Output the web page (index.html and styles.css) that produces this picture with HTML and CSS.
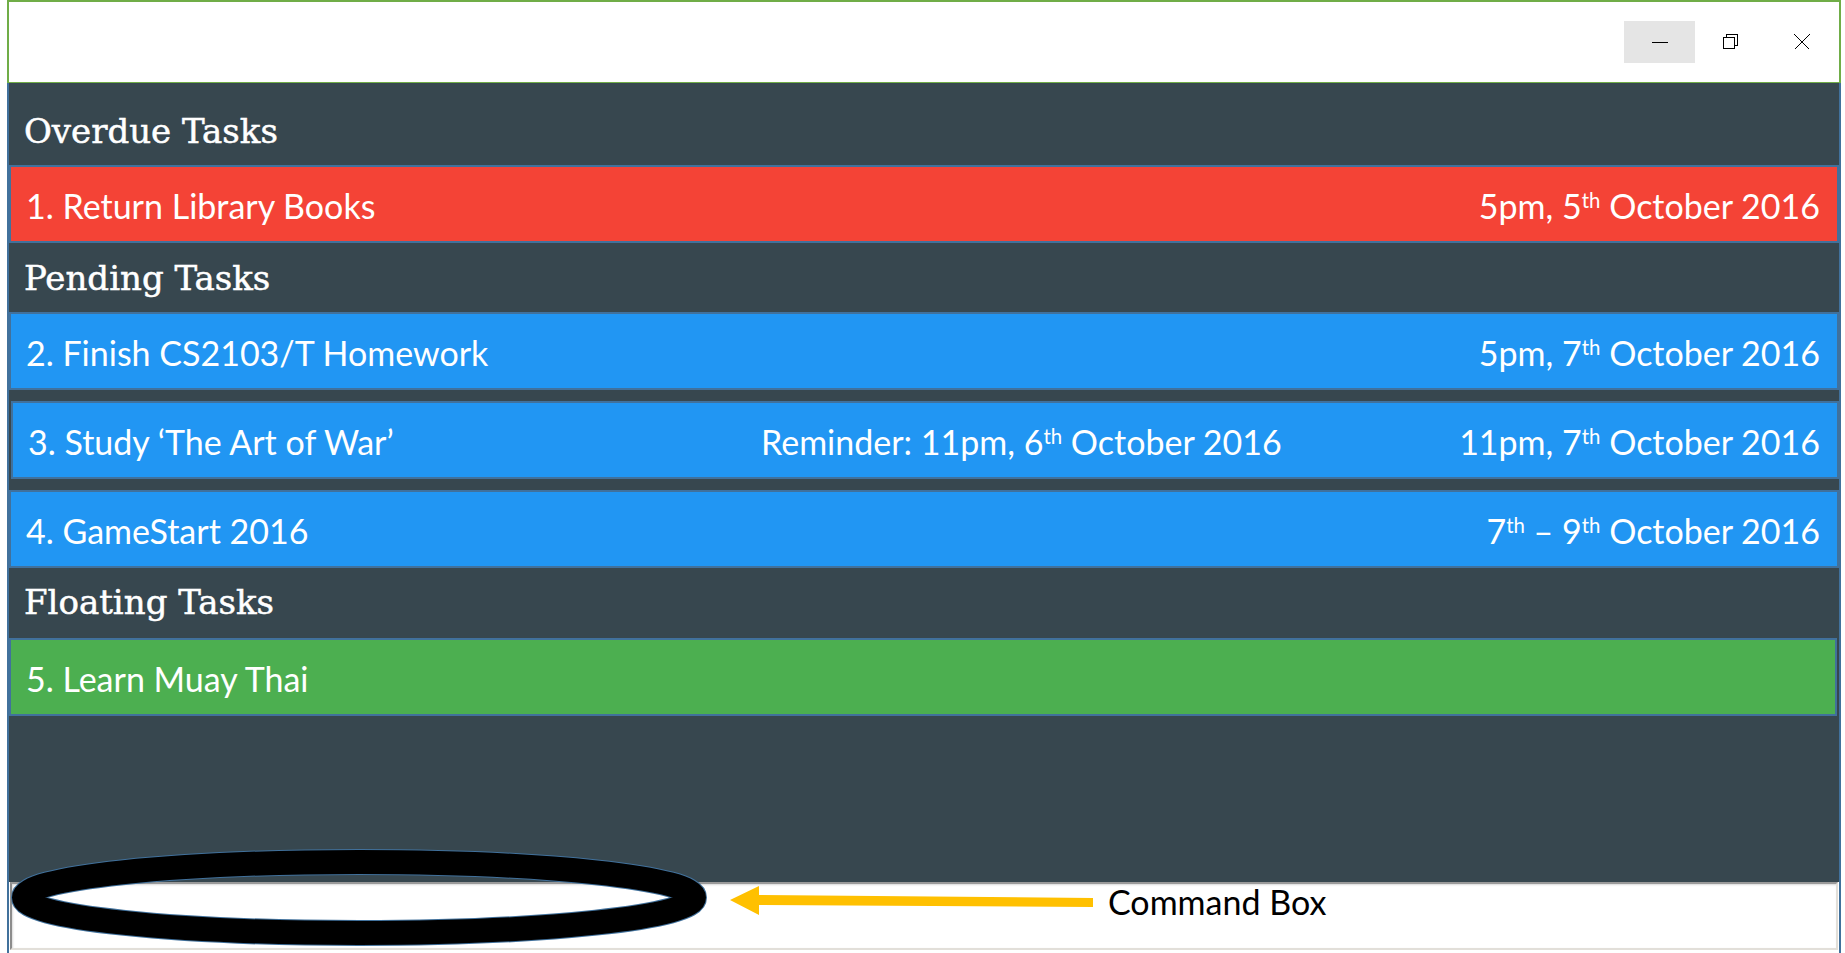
FILE: index.html
```html
<!DOCTYPE html>
<html lang="en">
<head>
<meta charset="utf-8">
<title>Task Manager</title>
<link rel="stylesheet" href="styles.css">
</head>
<body>
<div class="window">
  <div class="titlebar">
    <div class="caption-btn is-hover">
      <svg width="16" height="16" viewBox="0 0 16 16"><path d="M0 8.5H16" stroke="#000" stroke-width="1.2" fill="none"/></svg>
    </div>
    <div class="caption-btn">
      <svg width="16" height="16" viewBox="0 0 16 16"><path d="M0.5 3.5H11.5V14.5H0.5Z M3.5 3.5V0.5H14.5V11.5H11.5" stroke="#000" stroke-width="1.2" fill="none"/></svg>
    </div>
    <div class="caption-btn">
      <svg width="16" height="16" viewBox="0 0 16 16"><path d="M0.5 0.5L15.5 15.5M15.5 0.5L0.5 15.5" stroke="#000" stroke-width="1.2" fill="none"/></svg>
    </div>
  </div>
  <div class="app">
    <div class="tasks">
      <div class="section-title section-overdue">Overdue Tasks</div>
      <div class="task task-overdue">
        <span class="task-name">1. Return Library Books</span>
        <span class="task-date">5pm, 5<sup>th</sup> October 2016</span>
      </div>
      <div class="section-title section-pending">Pending Tasks</div>
      <div class="pending-list">
        <div class="task task-pending">
          <span class="task-name">2. Finish CS2103/T Homework</span>
          <span class="task-date">5pm, 7<sup>th</sup> October 2016</span>
        </div>
        <div class="task task-pending task-reminder">
          <span class="task-name">3. Study ‘The Art of War’</span>
          <span class="task-remind">Reminder: 11pm, 6<sup>th</sup> October 2016</span>
          <span class="task-date">11pm, 7<sup>th</sup> October 2016</span>
        </div>
        <div class="task task-pending">
          <span class="task-name">4. GameStart 2016</span>
          <span class="task-date">7<sup>th</sup> – 9<sup>th</sup> October 2016</span>
        </div>
      </div>
      <div class="section-title section-floating">Floating Tasks</div>
      <div class="task task-floating">
        <span class="task-name">5. Learn Muay Thai</span>
      </div>
    </div>
    <div class="command-box"></div>
  </div>
</div>
<svg class="annotation" width="1845" height="953" viewBox="0 0 1845 953">
  <ellipse cx="359" cy="897.5" rx="335" ry="35.5" fill="none" stroke="#41719C" stroke-width="26"/>
  <ellipse cx="359" cy="897.5" rx="335" ry="35.5" fill="none" stroke="#000" stroke-width="24"/>
  <polygon points="730,900 759,886 759,895 1093,898 1093,907 759,905 759,915" fill="#FFC000"/>
</svg>
<div class="annotation-label">Command Box</div>
</body>
</html>
```

FILE: styles.css
```css
html, body {
  margin: 0;
  padding: 0;
}

body {
  width: 1845px;
  height: 953px;
  overflow: hidden;
  background: #ffffff;
  font-family: Lato, "Open Sans", sans-serif;
  position: relative;
}

.window {
  margin-left: 7px;
  width: 1834px;
  height: 953px;
  display: flex;
  flex-direction: column;
}

.titlebar {
  box-sizing: border-box;
  height: 83px;
  border: 2px solid #70AD47;
  border-bottom-width: 1px;
  background: #ffffff;
  display: flex;
  justify-content: flex-end;
  align-items: center;
  padding-right: 2px;
}

.caption-btn {
  width: 71px;
  height: 42px;
  display: flex;
  align-items: center;
  justify-content: center;
}

.caption-btn svg {
  display: block;
  shape-rendering: crispEdges;
}

.caption-btn.is-hover {
  background: #E5E5E5;
}

.app {
  flex: 1;
  display: flex;
  flex-direction: column;
  border-left: 2px solid #41719C;
  border-right: 2px solid #41719C;
  background: #ffffff;
}

.tasks {
  flex: 1;
  background: #37474F;
  display: flex;
  flex-direction: column;
}

.section-title {
  font-family: "DejaVu Serif", serif;
  font-size: 34px;
  line-height: 1;
  color: #ffffff;
  -webkit-text-stroke: 0.5px #ffffff;
  padding-left: 15px;
  display: flex;
  align-items: center;
  box-sizing: border-box;
}

.section-overdue {
  height: 82px;
  padding-top: 14px;
}

.section-pending {
  height: 69px;
  padding-top: 0;
}

.section-floating {
  height: 70px;
  padding-bottom: 2px;
}

.pending-list {
  display: flex;
  flex-direction: column;
  gap: 11px;
}

.task {
  box-sizing: border-box;
  height: 78px;
  border: 2px solid #41719C;
  padding: 4px 17px 0 15px;
  display: grid;
  grid-template-columns: 1fr auto;
  align-items: center;
  color: #ffffff;
  font-size: 34px;
  line-height: 1;
}

.task-overdue {
  background: #F44336;
}

.task-pending {
  background: #2196F3;
}

.task-floating {
  background: #4CAF50;
  margin-right: 2px;
}

.task-reminder {
  margin-left: 2px;
  grid-template-columns: 733px auto 1fr;
}

.task-date {
  justify-self: end;
}

.task sup {
  font-size: 0.6em;
  line-height: 0;
  vertical-align: 0.55em;
}

.command-box {
  box-sizing: border-box;
  height: 68px;
  margin: 0 1px 3px 1px;
  background: #ffffff;
  border: 2px solid #E2DFD9;
  border-top-color: #9a9a9a;
  border-left-color: #8c8c8c;
  box-shadow: inset 1px 1px 2px rgba(0, 0, 0, 0.15);
}

.annotation {
  position: absolute;
  left: 0;
  top: 0;
  pointer-events: none;
}

.annotation-label {
  position: absolute;
  left: 1108px;
  top: 885px;
  font-family: Lato, "Open Sans", sans-serif;
  font-size: 34px;
  line-height: 1;
  color: #000000;
}
```
